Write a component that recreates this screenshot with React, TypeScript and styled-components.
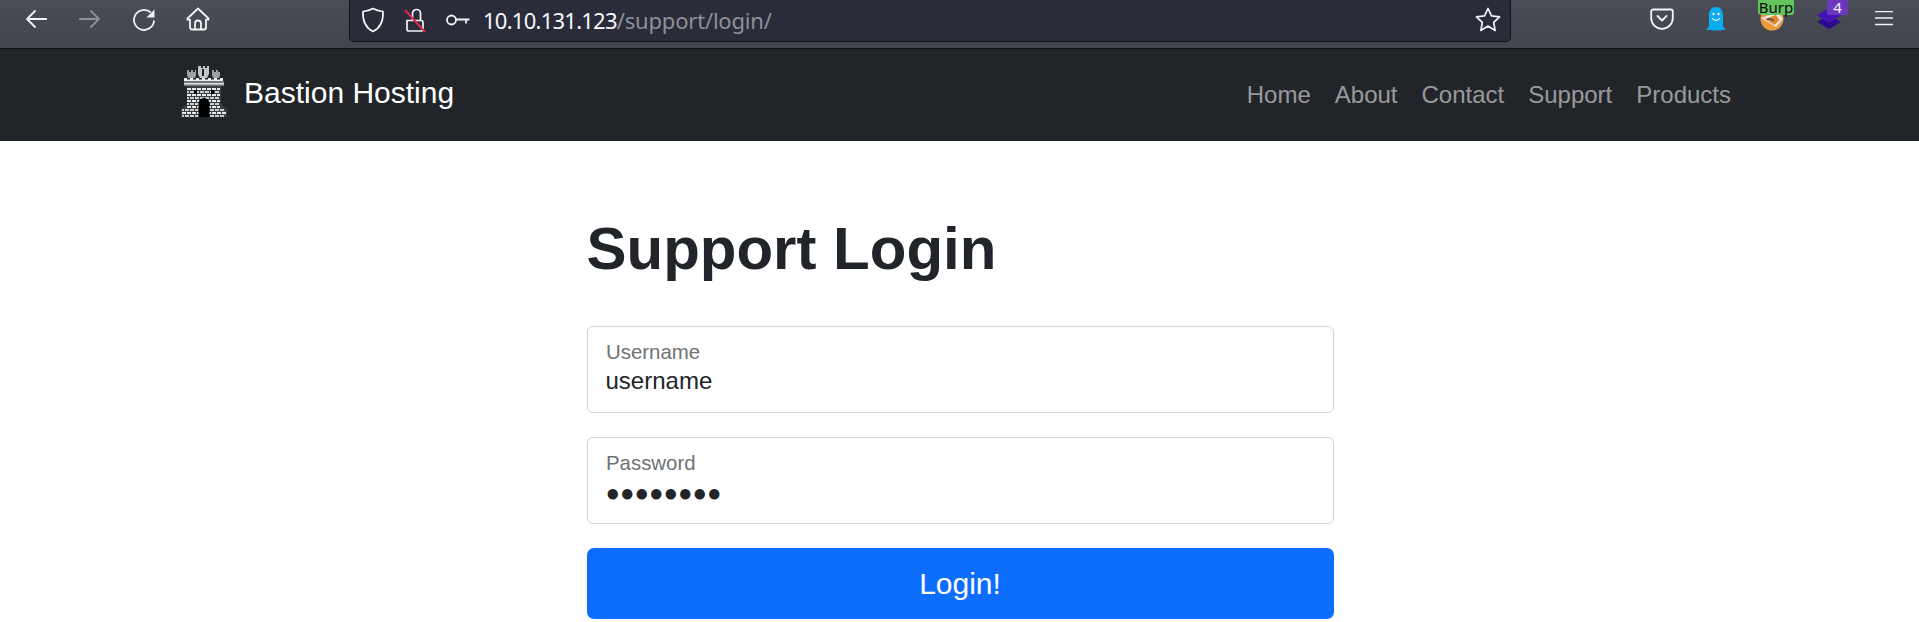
import styled, { createGlobalStyle } from 'styled-components'

const GlobalStyle = createGlobalStyle`
  html, body {
    margin: 0;
    padding: 0;
    height: 622px;
    overflow: hidden;
    background: #fff;
    font-family: "Liberation Sans", Arial, sans-serif;
  }
`

const Toolbar = styled.div`
  height: 49px;
  box-sizing: border-box;
  display: flex;
  align-items: flex-start;
  background: linear-gradient(#4a4d56, #42454e);
  border-bottom: 1px solid #111216;
`

const ToolIcon = styled.div<{ $w?: number }>`
  width: ${(p) => p.$w ?? 54}px;
  height: 38px;
  display: flex;
  align-items: center;
  justify-content: center;
  flex: none;
  position: relative;
  color: ${(p) => p.color ?? '#f4f4f6'};
`

const NavButtons = styled.div`
  display: flex;
  padding-left: 9px;
  width: 349px;
  box-sizing: border-box;
  flex: none;
`

const UrlBar = styled.div`
  width: 1162px;
  height: 42px;
  flex: none;
  box-sizing: border-box;
  display: flex;
  align-items: center;
  background: #2a2c39;
  border: 1px solid #111216;
  border-top: none;
  border-radius: 0 0 5px 5px;
  padding: 0 1px 2px 2px;
`

const UrlIcon = styled.div`
  width: 42px;
  height: 38px;
  flex: none;
  display: flex;
  align-items: center;
  justify-content: center;
  color: #f4f4f6;
`

const UrlText = styled.div`
  flex: 1;
  margin-left: 5px;
  font-family: "Noto Sans", sans-serif;
  font-size: 22px;
  letter-spacing: -0.75px;
  color: #f8f8fa;
  white-space: nowrap;
`

const UrlPath = styled.span`
  color: #8f9097;
  letter-spacing: -0.2px;
`

const RightIcons = styled.div`
  display: flex;
  padding-left: 124px;
  flex: none;
`

const Badge = styled.span<{ $bg: string; $fg: string; $left: number; $w: number }>`
  position: absolute;
  top: 0;
  left: ${(p) => p.$left}px;
  width: ${(p) => p.$w}px;
  height: 15px;
  line-height: 14px;
  text-align: center;
  border-radius: 0 0 3px 3px;
  font-family: "Noto Sans", sans-serif;
  font-size: 15px;
  background: ${(p) => p.$bg};
  color: ${(p) => p.$fg};
`

const Navbar = styled.nav`
  height: 92px;
  background: #212529;
  display: flex;
  align-items: center;
  padding: 0 188px 0 181px;
  justify-content: space-between;
`

const Brand = styled.a`
  display: flex;
  align-items: center;
  gap: 17px;
  color: #fff;
  font-size: 30px;
  margin-bottom: 4px;
`

const LogoBox = styled.span`
  display: block;
  height: 52px;
  margin-bottom: 4px;
`

const NavLinks = styled.div`
  display: flex;
  gap: 24px;
`

const NavLink = styled.a`
  font-size: 24px;
  color: rgba(255, 255, 255, 0.55);
`

const Main = styled.main`
  width: 747px;
  margin: 0 auto;
  padding-top: 72px;
  position: relative;
  left: 0.5px;
`

const Title = styled.h1`
  margin: 0 0 41px;
  font-size: 60px;
  line-height: 72px;
  font-weight: 700;
  color: #212529;
`

const Field = styled.div`
  position: relative;
  margin-bottom: 24px;
`

const FieldLabel = styled.label`
  position: absolute;
  left: 19.5px;
  top: 15px;
  font-size: 20.4px;
  color: #6f7276;
`

const Input = styled.input<{ $dots?: boolean }>`
  display: block;
  width: 100%;
  height: 87px;
  box-sizing: border-box;
  padding: ${(p) => (p.$dots ? '33px 18px 8px' : '32px 18px 9px')};
  border: 1.5px solid #ced4da;
  border-radius: 6px;
  font-family: "Liberation Sans", Arial, sans-serif;
  font-size: 24px;
  color: #212529;
  background: #fff;
  outline: none;
`

const LoginButton = styled.button`
  display: block;
  width: 100%;
  height: 71px;
  border: none;
  border-radius: 7px;
  background: #0d6efd;
  color: #fff;
  font-family: "Liberation Sans", Arial, sans-serif;
  font-size: 30px;
`

const BackIcon = () => (
  <svg width="24" height="24" viewBox="0 0 24 24" fill="none" stroke="currentColor" strokeWidth="1.8">
    <path d="M23 12H3M11.500 3.500 3 12l8.500 8.500" />
  </svg>
)

const ForwardIcon = () => (
  <svg width="24" height="24" viewBox="0 0 24 24" fill="none" stroke="currentColor" strokeWidth="1.8">
    <path d="M1 12h20M12.500 3.500 21 12l-8.500 8.500" />
  </svg>
)

const ReloadIcon = () => (
  <svg width="24" height="24" viewBox="0 0 24 24" fill="none" stroke="currentColor" strokeWidth="1.8" style={{ marginTop: 2 }}>
    <path d="M22 12.500a10 10 0 1 1-3.300-8" />
    <path d="M22.500 1.500v8h-8z" fill="currentColor" stroke="none" />
  </svg>
)

const HomeIcon = () => (
  <svg width="24" height="24" viewBox="0 0 24 24" fill="none" stroke="currentColor" strokeWidth="1.8" strokeLinejoin="round">
    <path d="M1.500 11.500 12 1.500l10.500 10v1.200H20v7.800a2 2 0 0 1-2 2H6a2 2 0 0 1-2-2v-7.800H1.500z" />
    <path d="M9 22.500v-6a3 3 0 0 1 6 0v6" />
  </svg>
)

const ShieldIcon = () => (
  <svg width="24" height="26" viewBox="0 0 24 26" fill="none" stroke="currentColor" strokeWidth="1.7" strokeLinejoin="round">
    <path d="M12 1.500c3 1.800 6 2.500 10 3 .5 9-2 16-10 20-8-4-10.500-11-10-20 4-.5 7-1.200 10-3z" />
  </svg>
)

const LockIcon = () => (
  <svg width="24" height="26" viewBox="0 0 24 26" fill="none">
    <path d="M4 13.500h14a2 2 0 0 1 2 2V22a2 2 0 0 1-2 2H6a2 2 0 0 1-2-2zM9.500 13V6.500a4 4 0 0 1 8 0V13" stroke="#f4f4f6" strokeWidth="1.7" />
    <path d="M2 3 22 25" stroke="#e22850" strokeWidth="2" />
  </svg>
)

const KeyIcon = () => (
  <svg width="25" height="14" viewBox="0 0 25 14" fill="none" stroke="currentColor" strokeWidth="1.8">
    <circle cx="6.500" cy="7" r="4.500" />
    <path d="M11 6.500h13.500M21 6.500v4" />
  </svg>
)

const StarIcon = () => (
  <svg width="26" height="25" viewBox="0 0 26 25" fill="none" stroke="currentColor" strokeWidth="1.7" strokeLinejoin="round">
    <path d="M13 1.500l3.500 7.300 8 1.100-5.800 5.500 1.400 8L13 19.100 5.900 23.400l1.400-8L1.500 9.900l8-1.100z" />
  </svg>
)

const PocketIcon = () => (
  <svg width="24" height="22" viewBox="0 0 24 22" fill="none" stroke="currentColor" strokeWidth="1.800" strokeLinecap="round" strokeLinejoin="round">
    <path d="M3 1.500h18a1.800 1.800 0 0 1 1.800 1.800V10a10.800 10.800 0 0 1-21.600 0V3.300A1.800 1.800 0 0 1 3 1.500z" />
    <path d="M7.500 8l4.500 4.500L16.500 8" />
  </svg>
)

const GhostIcon = () => (
  <svg width="20" height="24" viewBox="0 0 20 24">
    <path d="M10 0c4.500 0 7 3.500 7 8v10c0 2 1.500 3.500 3 4.500-1.500.8-3 .8-4 0-1 1.500-2.500 1.500-3.500.3-1 1.200-3 1.200-4 0-1 1.200-2.500 1.200-3.500-.3-1 .8-2.500.8-5 0 1.500-1 3-2.500 3-4.500V8c0-4.500 2.500-8 7-8z" fill="#08aef0" />
    <circle cx="7.500" cy="7" r="1.200" fill="#fff" />
    <circle cx="12.500" cy="7" r="1.200" fill="#fff" />
    <path d="M6.500 11.500c1.500 2.500 5.500 2.500 7 0" fill="none" stroke="#fff" strokeWidth="1.200" strokeLinecap="round" />
  </svg>
)

const BurpIcon = () => (
  <svg width="24" height="24" viewBox="0 0 24 24" style={{ marginTop: -1 }}>
    <circle cx="12" cy="12" r="11.500" fill="#ef9a3c" />
    <path d="M1 11l17-6 5 7-7 8z" fill="#ece8e2" />
    <path d="M5 12l11-4 3.500 5-5 5z" fill="#e4852f" />
    <path d="M7 12.500c3-1.500 5 0 7 1" stroke="#4b4b4b" strokeWidth="1.400" fill="none" />
  </svg>
)

const LayersIcon = () => (
  <svg width="24" height="24" viewBox="0 0 24 24">
    <path d="M12 8 24 15 12 22 0 15z" fill="#2c0a8c" />
    <path d="M12 1 24 8.500 12 16 0 8.500z" fill="#4612b4" />
  </svg>
)

const MenuIcon = () => (
  <svg width="18" height="16" viewBox="0 0 18 16" fill="none" stroke="currentColor" strokeWidth="1.700">
    <path d="M0 .5h18M0 7h18M0 13.500h18" />
  </svg>
)

// pixel castle, courses of brick over a mid grey block
const CastleLogo = () => {
  const bricks = []
  for (let row = 0; row < 10; row++) {
    const y = 23 + row * 3
    const wide = row > 6
    const from = wide ? 1 : 6
    const to = wide ? 44 : 38
    for (let x = from - (row % 2 ? 2 : 0); x < to; x += 5) {
      const left = Math.max(x, from)
      const right = Math.min(x + 4, to + 1)
      bricks.push(<rect key={`${x}-${y}`} x={left} y={y} width={right - left} height="2" fill={row % 2 ? '#c9cdd0' : '#e6e9ea'} />)
    }
  }
  return (
    <svg width="46" height="52" viewBox="0 0 46 52">
      <path d="M0 52V44L6 39V21H40V39L46 44V52z" fill="#3c3f42" />
      {bricks}
      <rect x="3" y="16" width="40" height="5" fill="#74787b" />
      <rect x="3" y="18" width="40" height="1.500" fill="#dfe2e4" />
      <path d="M3 16V13h3v1.500h3V13h3v1.500h3V13h3v1.500h3V13h3v1.500h3V13h3v1.500h3V13h3v1.500h3V13h3v3z" fill="#eceeef" />
      <path d="M7 13l-1-3V5h2v2h2V5h2v2h2V5h1v5l-1 3z" fill="#9da2a5" />
      <path d="M19 13l-2-4V1h3v2h2V1h2v2h2V1h2v8l-2 4z" fill="#c2c6c9" />
      <path d="M32 13l-1-3V5h2v2h2V5h2v2h2v3l-1 3z" fill="#9da2a5" />
      <rect x="21" y="4" width="2" height="7" fill="#222" />
      <rect x="13" y="25" width="3" height="4" fill="#000" />
      <rect x="30" y="25" width="3" height="4" fill="#000" />
      <path d="M17.500 52V38.500a5.500 5.500 0 0 1 11 0V52z" fill="#000" />
    </svg>
  )
}

export default function App() {
  return (
    <>
      <GlobalStyle />
      <Toolbar>
        <NavButtons>
          <ToolIcon><BackIcon /></ToolIcon>
          <ToolIcon color="#8e9095"><ForwardIcon /></ToolIcon>
          <ToolIcon><ReloadIcon /></ToolIcon>
          <ToolIcon><HomeIcon /></ToolIcon>
        </NavButtons>
        <UrlBar>
          <UrlIcon><ShieldIcon /></UrlIcon>
          <UrlIcon><LockIcon /></UrlIcon>
          <UrlIcon><KeyIcon /></UrlIcon>
          <UrlText>10.10.131.123<UrlPath>/support/login/</UrlPath></UrlText>
          <UrlIcon><StarIcon /></UrlIcon>
        </UrlBar>
        <RightIcons>
          <ToolIcon><PocketIcon /></ToolIcon>
          <ToolIcon><GhostIcon /></ToolIcon>
          <ToolIcon $w={58}>
            <BurpIcon />
            <Badge $bg="#62c45e" $fg="#0b0b0b" $left={15} $w={36}>Burp</Badge>
          </ToolIcon>
          <ToolIcon $w={56}>
            <LayersIcon />
            <Badge $bg="#6b38bc" $fg="#f4f0ff" $left={26} $w={21}>4</Badge>
          </ToolIcon>
          <ToolIcon $w={54}><MenuIcon /></ToolIcon>
        </RightIcons>
      </Toolbar>
      <Navbar>
        <Brand>
          <LogoBox><CastleLogo /></LogoBox>
          Bastion Hosting
        </Brand>
        <NavLinks>
          <NavLink>Home</NavLink>
          <NavLink>About</NavLink>
          <NavLink>Contact</NavLink>
          <NavLink>Support</NavLink>
          <NavLink>Products</NavLink>
        </NavLinks>
      </Navbar>
      <Main>
        <Title>Support Login</Title>
        <Field>
          <Input type="text" defaultValue="username" readOnly />
          <FieldLabel>Username</FieldLabel>
        </Field>
        <Field>
          <Input $dots type="text" defaultValue="●●●●●●●●" readOnly />
          <FieldLabel>Password</FieldLabel>
        </Field>
        <LoginButton>Login!</LoginButton>
      </Main>
    </>
  )
}
